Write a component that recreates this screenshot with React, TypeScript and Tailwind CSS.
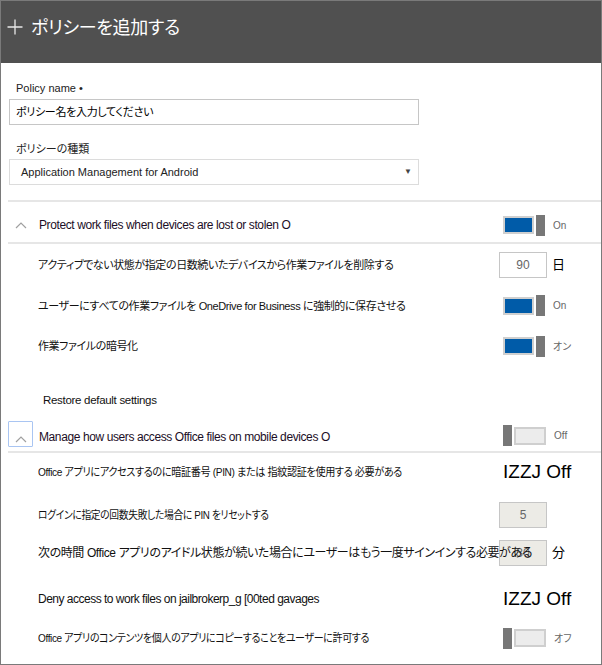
import React from "react";

const font = "font-['Liberation_Sans','Noto_Sans_CJK_JP',sans-serif] [font-feature-settings:'palt']";

function Chevron() {
  return (
    <svg width="12" height="8" viewBox="0 0 12 8" className="block">
      <polyline points="1,7 6,2 11,7" fill="none" stroke="#a0a0a0" strokeWidth="1.2" />
    </svg>
  );
}

function Toggle({ on, label }: { on: boolean; label: string }) {
  return (
    <div className="flex items-center">
      {on ? (
        <div className="flex items-center gap-[2px]">
          <div className="w-[31px] h-[18px] border-2 border-[#cfcfcf] bg-[#005ba8]" />
          <div className="w-[9px] h-[21px] bg-[#777777]" />
        </div>
      ) : (
        <div className="flex items-center gap-[2px]">
          <div className="w-[9px] h-[21px] bg-[#777777]" />
          <div className="w-[32px] h-[18px] border-2 border-[#cfcfcf] bg-[#ececec]" />
        </div>
      )}
      <span className="ml-[8px] text-[10px] text-[#666]">{label}</span>
    </div>
  );
}

function NumBox({ value, disabled, unit }: { value: string; disabled?: boolean; unit?: string }) {
  return (
    <div className="flex items-center">
      <div
        className={`w-[48px] h-[26px] border border-[#c6c6c6] flex items-center justify-center text-[12px] text-[#666] ${
          disabled ? "bg-[#ecebe6]" : "bg-white"
        }`}
      >
        {value}
      </div>
      {unit && <span className="ml-[5px] text-[13px] leading-[14px] text-black">{unit}</span>}
    </div>
  );
}

function Row({
  h,
  text,
  cls = "text-[11px] tracking-[-0.4px]",
  children,
}: {
  h: string;
  text: string;
  cls?: string;
  children: React.ReactNode;
}) {
  return (
    <div className={`flex items-center ${h}`}>
      <div className="w-[498px] pl-[37px] relative z-10">
        <div className={`leading-[14px] text-[#111] whitespace-nowrap origin-left ${cls}`}>{text}</div>
      </div>
      <div className="flex-1">{children}</div>
    </div>
  );
}

export default function App() {
  return (
    <div className={`w-[602px] h-[665px] border border-[#7a7a7a] bg-white overflow-hidden ${font}`}>
      {/* header */}
      <div className="h-[62px] bg-[#505050] flex items-start pt-[14px] pl-[6px]">
        <svg width="16" height="16" viewBox="0 0 16 16" className="mt-[4px]">
          <path d="M8 0.5V15.5M0.5 8H15.5" stroke="#e8e8e8" strokeWidth="1.3" fill="none" />
        </svg>
        <span className="ml-[8px] text-white text-[18px] tracking-[-0.3px] leading-[26px]">ポリシーを追加する</span>
      </div>

      {/* form */}
      <div className="pl-[8px] pr-[182px] pt-[17px]">
        <div className="pl-[7px] text-[11px] text-[#222] h-[16px]">Policy name •</div>
        <div className="mt-[3px] h-[26px] border border-[#c6c6c6] flex items-center pl-[6px] text-[11px] tracking-[-0.3px] text-black">
          ポリシー名を入力してください
        </div>
        <div className="mt-[16px] pl-[7px] text-[11px] text-[#222] h-[16px]">ポリシーの種類</div>
        <div className="mt-[2px] h-[26px] border border-[#dcdcdc] flex items-center pl-[11px] pr-[6px] text-[11px] text-[#222]">
          <span className="flex-1">Application Management for Android</span>
          <span className="text-[8px] text-[#444]">▼</span>
        </div>
      </div>

      {/* section 1 */}
      <div className="mt-[15px] ml-[7px] h-[2px] bg-[#e6e6e6]" />
      <div className="flex items-center h-[40px] pt-[6px]">
        <div className="w-[498px] flex items-center pl-[14px]">
          <Chevron />
          <span className="ml-[12px] text-[12px] tracking-[-0.4px] text-[#1c0e26]">
            Protect work files when devices are lost or stolen O
          </span>
        </div>
        <div className="pl-[4px]">
          <Toggle on label="On" />
        </div>
      </div>
      <div className="ml-[7px] h-[2px] bg-[#e6e6e6]" />
      <div>
        <Row h="h-[41px]" text="アクティブでない状態が指定の日数続いたデバイスから作業ファイルを削除する">
          <NumBox value="90" unit="日" />
        </Row>
        <Row h="h-[41px]" text="ユーザーにすべての作業ファイルを OneDrive for Business に強制的に保存させる">
          <div className="pl-[4px]">
            <Toggle on label="On" />
          </div>
        </Row>
        <Row h="h-[40px]" text="作業ファイルの暗号化">
          <div className="pl-[4px]">
            <Toggle on label="オン" />
          </div>
        </Row>
      </div>

      <div className="h-[50px] flex items-center pl-[42px] pt-[20px] text-[11.5px] tracking-[-0.3px] text-[#111]">
        Restore default settings
      </div>

      {/* section 2 */}
      <div className="flex items-end h-[28px] mt-[3px]">
        <div className="w-[498px] flex items-end pl-[7px]">
          <div className="w-[25px] h-[26px] border border-[#a9c5f2] rounded-[1px] flex items-end justify-center pb-[3px]">
            <Chevron />
          </div>
          <span className="ml-[6px] mb-[1px] text-[12px] tracking-[-0.4px] text-[#1c0e26]">
            Manage how users access Office files on mobile devices O
          </span>
        </div>
        <div className="mb-[1px] pl-[4px]">
          <Toggle on={false} label="Off" />
        </div>
      </div>
      <div className="mt-[4px] ml-[7px] h-[2px] bg-[#e6e6e6]" />

      <Row
        h="h-[38px]"
        cls="text-[11px] tracking-[-0.4px] scale-x-[0.92]"
        text="Office アプリにアクセスするのに暗証番号 (PIN) または 指紋認証を使用する 必要がある"
      >
        <div className="pl-[4px] text-[19px] text-black">IZZJ Off</div>
      </Row>
      <Row h="h-[48px]" cls="text-[11px] tracking-[-0.4px] scale-x-[0.89]" text="ログインに指定の回数失敗した場合に PIN をリセットする">
        <NumBox value="5" disabled />
      </Row>
      <Row
        h="h-[28px]"
        cls="text-[12px] tracking-[-0.4px]"
        text="次の時間 Office アプリのアイドル状態が続いた場合にユーザーはもう一度サインインする必要がある"
      >
        <NumBox value="30" disabled unit="分" />
      </Row>
      <Row h="h-[64px]" cls="text-[12px] tracking-[-0.5px] text-[#1c0e26]" text="Deny access to work files on jailbrokerp_g [00ted gavages">
        <div className="pl-[4px] text-[19px] text-black">IZZJ Off</div>
      </Row>
      <Row
        h="h-[14px]"
        cls="text-[11px] tracking-[-0.4px] scale-x-[0.91]"
        text="Office アプリのコンテンツを個人のアプリにコピーすることをユーザーに許可する"
      >
        <div className="pl-[4px]">
          <Toggle on={false} label="オフ" />
        </div>
      </Row>
    </div>
  );
}
